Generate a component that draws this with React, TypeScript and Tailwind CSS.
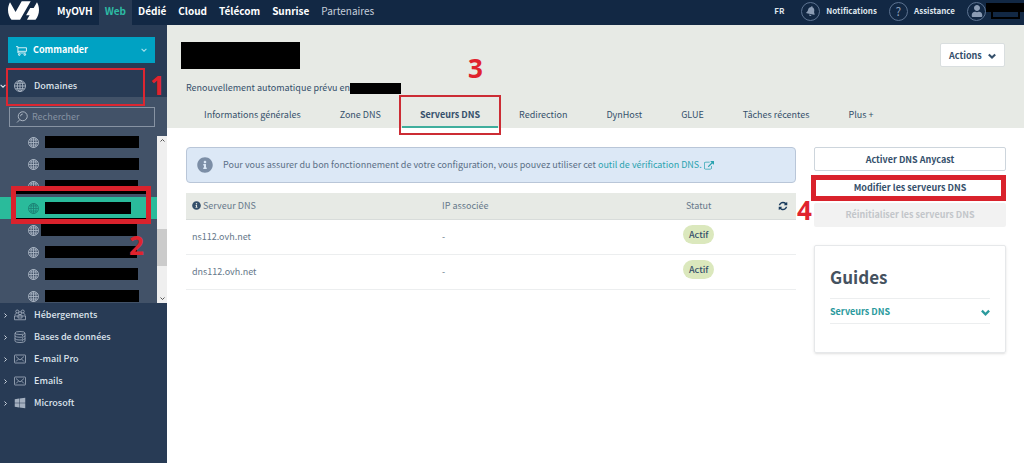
import type { ReactNode } from "react";
import { SiOvh } from "react-icons/si";
import { FaBell, FaInfoCircle, FaUser, FaWindows } from "react-icons/fa";

const universes = ["MyOVH", "Web", "Dédié", "Cloud", "Télécom", "Sunrise"];

const domains = [
  { id: 1, bar: "w-[94px]" },
  { id: 2, bar: "w-[94px]" },
  { id: 3, bar: "w-[93px]" },
  { id: 4, bar: "w-[86px]", selected: true },
  { id: 5, bar: "w-[96px] -ml-1" },
  { id: 6, bar: "w-[92px]" },
  { id: 7, bar: "w-[93px]" },
  { id: 8, bar: "w-[94px]" },
];

const tabs = [
  "Informations générales",
  "Zone DNS",
  "Serveurs DNS",
  "Redirection",
  "DynHost",
  "GLUE",
  "Tâches récentes",
  "Plus +",
];

const servers = [
  { name: "ns112.ovh.net", ip: "-", status: "Actif" },
  { name: "dns112.ovh.net", ip: "-", status: "Actif" },
];

function GlobeIcon({ className }: { className?: string }) {
  return (
    <svg viewBox="0 0 24 24" fill="none" stroke="currentColor" strokeWidth="1.8" className={className}>
      <circle cx="12" cy="12" r="11" />
      <ellipse cx="12" cy="12" rx="5.5" ry="11" />
      <path d="M12 1v22M1 12h22M3 6.5h18M3 17.5h18" />
    </svg>
  );
}

function CartIcon({ className }: { className?: string }) {
  return (
    <svg viewBox="0 0 20 20" fill="none" stroke="currentColor" strokeWidth="1.5" className={className}>
      <path d="M0 3h3.5v11.5H18M3.5 5H19v6.5H3.5" />
      <circle cx="6" cy="17.5" r="1.5" />
      <circle cx="16" cy="17.5" r="1.5" />
    </svg>
  );
}

function SearchIcon({ className }: { className?: string }) {
  return (
    <svg viewBox="0 0 24 24" fill="none" stroke="currentColor" strokeWidth="1.8" className={className}>
      <circle cx="13.5" cy="10.5" r="9" />
      <path d="M7.5 17.5L2 23M9 10.5a4.5 4.5 0 0 1 4.5-4.5" />
    </svg>
  );
}

function HostingIcon({ className }: { className?: string }) {
  return (
    <svg viewBox="0 0 24 24" fill="none" stroke="currentColor" strokeWidth="1.6" className={className}>
      <circle cx="6.5" cy="5" r="3" />
      <circle cx="17.5" cy="5" r="3" />
      <circle cx="12" cy="8.5" r="3" />
      <path d="M2 13c0-3 1.5-5 4.5-5M22 13c0-3-1.5-5-4.5-5M7.5 14c0-1.5 2-2.5 4.5-2.5s4.5 1 4.5 2.5" />
      <path d="M1 14h22v7.5H1zM8 14v4h8v-4" />
    </svg>
  );
}

function DatabaseIcon({ className }: { className?: string }) {
  return (
    <svg viewBox="0 0 24 24" fill="none" stroke="currentColor" strokeWidth="1.6" className={className}>
      <ellipse cx="12" cy="4" rx="10" ry="3" />
      <path d="M2 4v16c0 1.7 4 3 10 3s10-1.3 10-3V4M2 9.5c0 1.7 4 3 10 3s10-1.3 10-3M2 15c0 1.7 4 3 10 3s10-1.3 10-3" />
      <path d="M16 9h2M16 14.5h2M16 19.5h2" />
    </svg>
  );
}

function MailIcon({ className }: { className?: string }) {
  return (
    <svg viewBox="0 0 24 24" fill="none" stroke="currentColor" strokeWidth="1.6" className={className}>
      <rect x="1" y="4" width="22" height="16" rx="1" />
      <path d="M4 7l8 7 8-7M4 17l5-5M20 17l-5-5" />
    </svg>
  );
}

function Chevron({ className, bold }: { className?: string; bold?: boolean }) {
  return (
    <svg viewBox="0 0 10 10" fill="none" stroke="currentColor" strokeWidth={bold ? 2.6 : 1.8} className={className}>
      <path d="M1 3l4 4 4-4" />
    </svg>
  );
}

function RefreshIcon({ className }: { className?: string }) {
  return (
    <svg viewBox="0 0 1792 1792" fill="currentColor" className={className}>
      <path d="M1639 1056q0 5-1 7-64 268-268 434.5t-478 166.5q-146 0-282.5-55t-243.5-157l-129 129q-19 19-45 19t-45-19-19-45v-448q0-26 19-45t45-19h448q26 0 45 19t19 45-19 45l-137 137q71 66 161 102t187 36q134 0 250-65t186-179q11-17 53-117 8-23 30-23h192q13 0 22.5 9.5t9.5 22.5zm25-800v448q0 26-19 45t-45 19h-448q-26 0-45-19t-19-45 19-45l138-138q-148-137-349-137-134 0-250 65t-186 179q-11 17-53 117-8 23-30 23h-199q-13 0-22.5-9.5t-9.5-22.5v-7q65-268 270-434.5t480-166.5q146 0 284 55.5t245 156.5l130-129q19-19 45-19t45 19 19 45z" />
    </svg>
  );
}

function ExternalLinkIcon({ className }: { className?: string }) {
  return (
    <svg viewBox="0 0 1792 1792" fill="currentColor" className={className}>
      <path d="M1408 928v320q0 119-84.5 203.5t-203.5 84.5h-832q-119 0-203.5-84.5t-84.5-203.5v-832q0-119 84.5-203.5t203.5-84.5h704q14 0 23 9t9 23v64q0 14-9 23t-23 9h-704q-66 0-113 47t-47 113v832q0 66 47 113t113 47h832q66 0 113-47t47-113v-320q0-14 9-23t23-9h64q14 0 23 9t9 23zm384-864v512q0 26-19 45t-45 19-45-19l-176-176-652 652q-10 10-23 10t-23-10l-114-114q-10-10-10-23t10-23l652-652-176-176q-19-19-19-45t19-45 45-19h512q26 0 45 19t19 45z" />
    </svg>
  );
}

function RoundIcon({ children }: { children: ReactNode }) {
  return (
    <span className="flex size-[19px] items-center justify-center rounded-full border border-[#5d7391] text-[#8b9cb4]">
      {children}
    </span>
  );
}

// Numbered step of the walkthrough, drawn over the page
function Step({ n, className }: { n: number; className: string }) {
  return (
    <span
      className={`absolute z-20 font-['Open_Sans',sans-serif] text-[26px] leading-[26px] font-bold text-[#e0232e] ${className}`}
    >
      {n}
    </span>
  );
}

const services = [
  { label: "Hébergements", icon: <HostingIcon className="size-3" /> },
  { label: "Bases de données", icon: <DatabaseIcon className="size-3" /> },
  { label: "E-mail Pro", icon: <MailIcon className="size-3" /> },
  { label: "Emails", icon: <MailIcon className="size-3" /> },
  { label: "Microsoft", icon: <FaWindows className="size-3" /> },
];

function TopBar() {
  return (
    <header className="flex h-[25px] items-stretch justify-between bg-[#122844] text-white">
      <div className="flex items-stretch">
        <a href="#home" aria-label="OVH" className="flex w-[51px] items-center pb-1 pl-2">
          <SiOvh size={31} />
        </a>
        <nav className="flex items-stretch text-[10px] leading-[22px] font-bold">
          {universes.map((name) => (
            <a
              key={name}
              href="#universe"
              className={`px-[6px] ${name === "Web" ? "bg-[#283b55] text-[#2dbba4]" : ""}`}
            >
              {name}
            </a>
          ))}
          <a href="#partners" className="px-[6px] font-normal text-[#c6cfdb]">
            Partenaires
          </a>
        </nav>
      </div>
      <div className="flex items-center pb-[3px] text-[8px] leading-[14px] font-bold text-[#dfe5ec]">
        <button className="mr-[17px]">FR</button>
        <button className="mr-3 flex items-center gap-1.5">
          <RoundIcon>
            <FaBell className="size-2.5 rotate-12" />
          </RoundIcon>
          Notifications
        </button>
        <button className="mr-3 flex items-center gap-1.5">
          <RoundIcon>
            <span className="text-[12px] font-normal">?</span>
          </RoundIcon>
          Assistance
        </button>
        <button aria-label="Compte" className="flex items-center">
          <RoundIcon>
            <FaUser className="size-3" />
          </RoundIcon>
          <span className="flex w-[38px] flex-col items-center">
            <span className="h-[9px] w-full bg-black" />
            <span className="h-[7px] w-[29px] border-2 border-t-0 border-black" />
          </span>
        </button>
      </div>
    </header>
  );
}

function Sidebar() {
  return (
    <aside className="relative w-[167px] shrink-0 bg-[#283b55] text-[#dde4ec]">
      <button className="mt-3 ml-2 flex h-[26px] w-[147px] items-center bg-[#00a2c3] px-2 text-[9px] font-bold text-white">
        <CartIcon className="size-[11px]" />
        <span className="ml-1.5 flex-1 text-left">Commander</span>
        <Chevron className="size-[6px] text-[#a5e0ec]" />
      </button>

      <button className="mt-[5px] flex h-[29px] w-full items-center pt-1.5 text-[9px] font-medium">
        <Chevron className="size-[6px]" />
        <GlobeIcon className="ml-2 size-3 text-[#aeb9c7]" />
        <span className="ml-2">Domaines</span>
      </button>
      <div className="absolute top-[43px] left-1.5 z-10 h-[38px] w-[139px] border-2 border-[#dc2631]" />
      <Step n={1} className="top-[47px] left-[150px]" />

      <div className="bg-[#425268] pt-[10px]">
        <label className="ml-[9px] flex h-[20px] w-[146px] items-center border border-[#8793a3] pl-1.5">
          <SearchIcon className="size-3 shrink-0 text-[#b3bdca]" />
          <input
            type="search"
            aria-label="Rechercher"
            placeholder="Rechercher"
            className="ml-1 w-full min-w-0 bg-transparent text-[9px] outline-none placeholder:text-[#8793a3]"
          />
        </label>

        <div className="relative mt-1 flex h-[172px]">
          <ul className="flex-1 overflow-hidden">
            {domains.map(({ id, bar, selected }) => (
              <li
                key={id}
                className={`flex h-[22px] items-center pl-7 ${selected ? "bg-[#2abb9b] text-[#1d7f73]" : "text-[#aeb9c7]"}`}
              >
                <GlobeIcon className="mr-[6px] size-[11px]" />
                <span className={`h-3 bg-black ${bar}`} />
              </li>
            ))}
          </ul>
          <div className="mt-[5px] flex w-[10px] flex-col items-center justify-between bg-[#efefef] py-0.5 text-[#444]">
            <Chevron className="size-[5px] rotate-180" />
            <div className="mt-[86px] h-[37px] w-full bg-[#cbcbcb]" />
            <Chevron className="mt-auto size-[5px]" />
          </div>
          <div className="absolute top-[55px] left-[11px] z-10 h-[38px] w-[140px] border-[5px] border-[#d9222c]">
            <div className="h-full border-t-[3px] border-b border-black" />
          </div>
          <Step n={2} className="top-[101px] left-[129px]" />
        </div>
      </div>

      <nav className="pt-px text-[9px] font-medium">
        {services.map(({ label, icon }) => (
          <a key={label} href="#service" className="flex h-[22px] items-center pl-[3px]">
            <Chevron className="size-[5px] -rotate-90" />
            <span className="ml-1.5 flex w-3 justify-center text-[#a4b0c0]">{icon}</span>
            <span className="ml-2">{label}</span>
          </a>
        ))}
      </nav>
    </aside>
  );
}

function PageHeader() {
  return (
    <section className="relative h-[103px] bg-[#e7eae5] pt-[17px] pr-[19px] pl-[14px] text-[#35506b]">
      <div className="flex items-start justify-between">
        <h1 className="h-[27px] w-[119px] bg-black" />
        <button className="mt-px flex h-[24px] w-[65px] items-center justify-between rounded-xs border border-[#d9dedf] bg-white px-2 pt-0.5 text-[9px] font-bold">
          Actions
          <Chevron bold className="size-2" />
        </button>
      </div>
      <p className="mt-[11px] flex items-center pl-[5px] text-[9px] leading-4">
        Renouvellement automatique prévu en
        <span className="h-[11px] w-[51px] bg-black" />
      </p>
      <nav className="mt-[7px] flex gap-[3px] pl-[5px] text-[9px] leading-[23px]">
        {tabs.map((tab) => (
          <a
            key={tab}
            href="#tab"
            className={`relative border-b-2 px-[18px] whitespace-nowrap ${
              tab === "Serveurs DNS" ? "border-[#3fae9d] font-bold" : "border-transparent"
            }`}
          >
            {tab}
            {tab === "Serveurs DNS" && (
              <>
                <span className="absolute -inset-x-[3px] -top-2 z-10 h-[40px] border-2 border-[#cc2c34]" />
                <Step n={3} className="-top-[48px] left-[66px]" />
              </>
            )}
          </a>
        ))}
      </nav>
    </section>
  );
}

function ServerTable() {
  return (
    <table className="mt-[10px] w-full table-fixed text-left text-[9px] text-[#66788a]">
      <thead>
        <tr className="h-[26px] border-b border-[#d8dcda] bg-[#e7eae5]">
          <th className="w-[41%] pl-1.5 font-normal">
            <span className="flex items-center gap-0.5">
              <FaInfoCircle className="size-[9px] text-[#35506b]" />
              Serveur DNS
            </span>
          </th>
          <th className="w-[39%] pl-1.5 font-normal">IP associée</th>
          <th className="pl-3 font-normal">Statut</th>
          <th className="w-[30px]">
            <button aria-label="Actualiser" className="flex pl-3 text-[#183a5c]">
              <RefreshIcon className="size-[10px]" />
            </button>
          </th>
        </tr>
      </thead>
      <tbody>
        {servers.map(({ name, ip, status }) => (
          <tr key={name} className="h-[35px] border-b border-[#eceeef]">
            <td className="pl-1.5">{name}</td>
            <td className="pl-1.5">{ip}</td>
            <td className="pb-1 pl-[9px]" colSpan={2}>
              <span className="inline-block h-[19px] rounded-full bg-[#dbe8bd] px-1.5 leading-[19px] font-medium text-[#35506b]">
                {status}
              </span>
            </td>
          </tr>
        ))}
      </tbody>
    </table>
  );
}

function ActionsColumn() {
  return (
    <aside className="relative w-[192px] shrink-0 text-[9px] font-bold text-[#35506b]">
      <div className="flex flex-col gap-1">
        <button className="h-[24px] rounded-xs border border-[#cdd5dc] pt-0.5">Activer DNS Anycast</button>
        <button className="h-[24px] rounded-xs border border-[#cdd5dc] pt-0.5">Modifier les serveurs DNS</button>
        <button disabled className="h-[24px] rounded-xs bg-[#f2f2f2] text-[#c3c6ca]">
          Réinitialiser les serveurs DNS
        </button>
      </div>
      <div className="absolute top-7 right-0 -left-[3px] z-10 h-[26px] border-[5px] border-[#d9222c]" />
      <Step n={4} className="top-[50px] -left-[17px]" />

      <section className="mt-[18px] h-[108px] rounded-xs border border-[#e6e8ea] px-[15px] pt-[18px] shadow-sm">
        <h2 className="text-[17px] leading-[26px] text-[#45525f]">Guides</h2>
        <button className="mt-2 flex h-[26px] w-full items-center justify-between border-y border-[#eceeef] pt-0.5 text-[#2b9a9d]">
          Serveurs DNS
          <Chevron bold className="size-[9px]" />
        </button>
      </section>
    </aside>
  );
}

export default function App() {
  return (
    <div className="flex min-h-screen flex-col bg-white font-['Noto_Sans_CJK_SC',sans-serif]">
      <TopBar />
      <div className="flex flex-1">
        <Sidebar />
        <main className="min-w-0 flex-1">
          <PageHeader />
          <div className="flex gap-[18px] pt-[19px] pr-[18px] pl-[19px]">
            <div className="min-w-0 flex-1">
              <div className="flex h-[36px] items-center rounded-sm border border-[#b9c6d8] bg-[#dce8f6] px-[10px] text-[9px] text-[#5b6f86]">
                <FaInfoCircle className="size-4 text-[#7c8ea6]" />
                <p className="ml-[10px]">
                  Pour vous assurer du bon fonctionnement de votre configuration, vous pouvez utiliser cet{" "}
                  <a href="#check" className="text-[#2ba3b0]">
                    outil de vérification DNS. <ExternalLinkIcon className="inline size-[10px]" />
                  </a>
                </p>
              </div>
              <ServerTable />
            </div>
            <ActionsColumn />
          </div>
        </main>
      </div>
    </div>
  );
}
